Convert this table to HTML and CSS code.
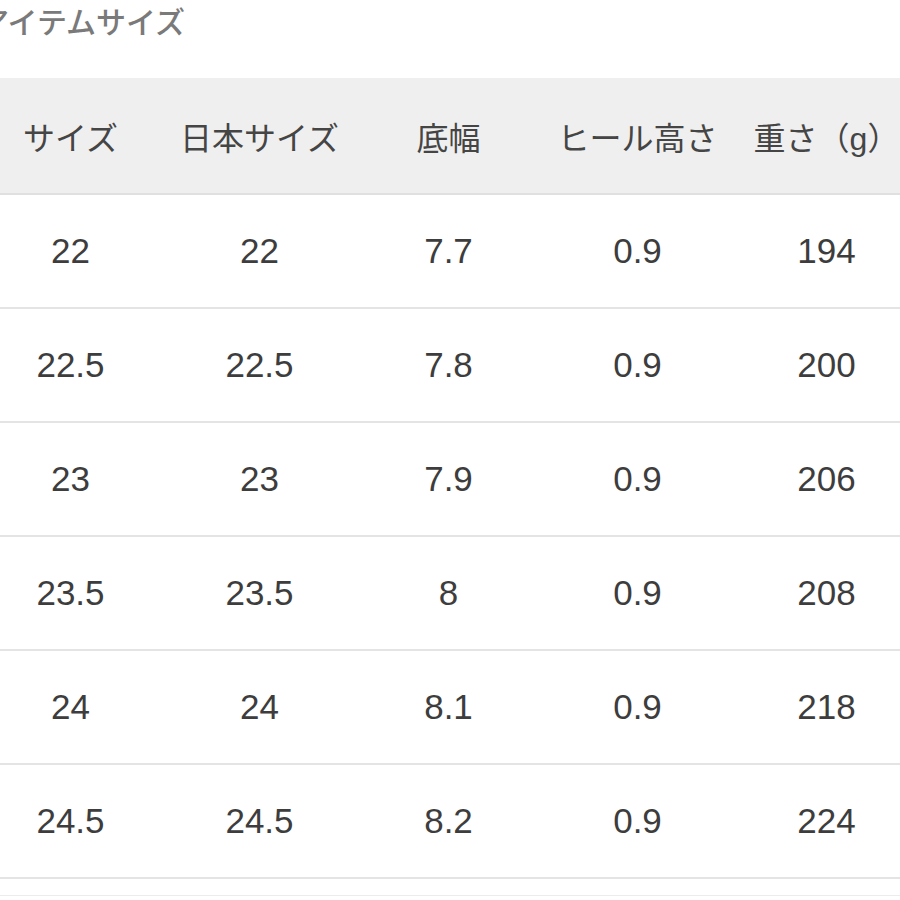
FILE: index.html
```html
<!DOCTYPE html>
<html lang="ja">
<head>
<meta charset="utf-8">
<link rel="stylesheet" href="styles.css">
</head>
<body>
<div class="page">
  <h2 class="title">アイテムサイズ</h2>
  <div class="table">
    <div class="row head">
      <div class="cell">サイズ</div>
      <div class="cell">日本サイズ</div>
      <div class="cell">底幅</div>
      <div class="cell">ヒール高さ</div>
      <div class="cell">重さ（g）</div>
    </div>
    <div class="row">
      <div class="cell">22</div><div class="cell">22</div><div class="cell">7.7</div><div class="cell">0.9</div><div class="cell">194</div>
    </div>
    <div class="row">
      <div class="cell">22.5</div><div class="cell">22.5</div><div class="cell">7.8</div><div class="cell">0.9</div><div class="cell">200</div>
    </div>
    <div class="row">
      <div class="cell">23</div><div class="cell">23</div><div class="cell">7.9</div><div class="cell">0.9</div><div class="cell">206</div>
    </div>
    <div class="row">
      <div class="cell">23.5</div><div class="cell">23.5</div><div class="cell">8</div><div class="cell">0.9</div><div class="cell">208</div>
    </div>
    <div class="row">
      <div class="cell">24</div><div class="cell">24</div><div class="cell">8.1</div><div class="cell">0.9</div><div class="cell">218</div>
    </div>
    <div class="row">
      <div class="cell">24.5</div><div class="cell">24.5</div><div class="cell">8.2</div><div class="cell">0.9</div><div class="cell">224</div>
    </div>
    <div class="row tail"></div>
  </div>
</div>
</body>
</html>
```
FILE: styles.css
```css
html, body {
  margin: 0;
  padding: 0;
  background: #ffffff;
  overflow: hidden;
}
.page {
  width: 900px;
  height: 900px;
  overflow: hidden;
  font-family: "Liberation Sans", "Noto Sans CJK JP", sans-serif;
}
.title {
  margin: 0 0 0 -21px;
  height: 78px;
  line-height: 46px;
  font-size: 30px;
  font-weight: 500;
  color: #7a7a7a;
  white-space: nowrap;
}
.table {
  margin-left: -24px;
  width: 945px;
}
.row {
  display: grid;
  grid-template-columns: repeat(5, 189px);
  height: 112px;
  border-bottom: 2px solid #e4e4e4;
  align-items: center;
}
.row.head {
  height: 115px;
  background: #efefef;
  border-bottom: 2px solid #e0e0e0;
}
.cell {
  text-align: center;
  font-size: 35px;
  color: #3d3d3d;
  white-space: nowrap;
}
.head .cell {
  font-size: 32px;
  color: #454545;
}
.row.tail {
  height: 16px;
  border-bottom: 1px solid #ececec;
}
```
